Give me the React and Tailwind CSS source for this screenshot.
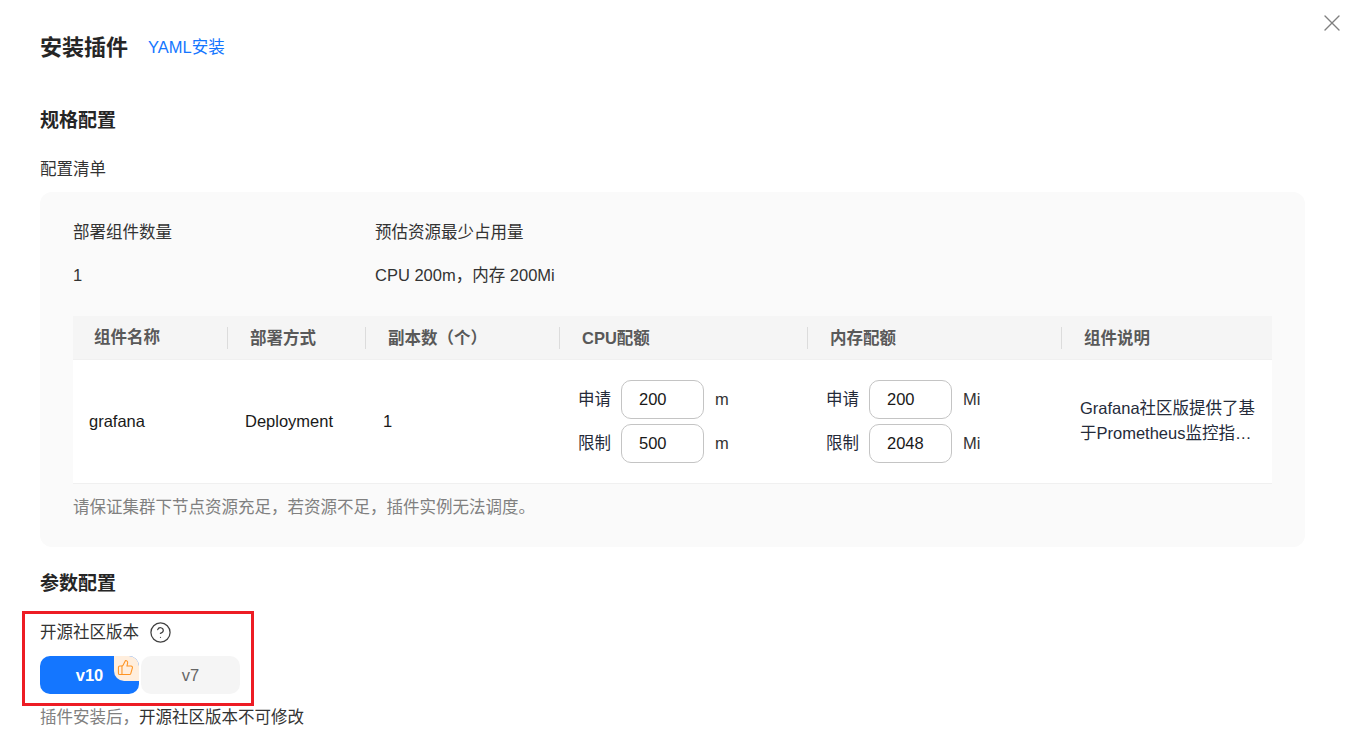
import { X, ThumbsUp, CircleHelp } from 'lucide-react';

const font = { fontFamily: '"Liberation Sans", "Noto Sans CJK SC", sans-serif' };

const columns = ['组件名称', '部署方式', '副本数（个）', 'CPU配额', '内存配额', '组件说明'];
const gridCols = 'grid grid-cols-[154px_138px_194px_248px_254px_1fr]';

function QuotaInput({ label, value, unit }) {
  return (
    <div className="flex items-center">
      <span className="w-[43px] text-[#252b3a]">{label}</span>
      <div className="flex h-[39px] w-[83px] items-center rounded-[10px] border border-[#c4c4c4] bg-white pl-[17px] text-[#191919]">
        {value}
      </div>
      <span className="ml-[11px] text-[#333]">{unit}</span>
    </div>
  );
}

function QuotaCell({ unit, request, limit }) {
  return (
    <div className="flex flex-col justify-center gap-[5px] pl-[19px]">
      <QuotaInput label="申请" value={request} unit={unit} />
      <QuotaInput label="限制" value={limit} unit={unit} />
    </div>
  );
}

export default function App() {
  return (
    <div style={font} className="relative h-[744px] overflow-hidden bg-white px-10 text-[16.5px] text-[#191919]">
      <button className="absolute right-[-1px] top-[9px] text-[#808080]">
        <X size={28} strokeWidth={1.2} />
      </button>

      <div className="flex h-[94px] items-center">
        <h1 className="text-[22px] font-bold text-[#262626]">安装插件</h1>
        <a className="ml-[20px] text-[#1476ff]">YAML安装</a>
      </div>

      <h2 className="mt-[14px] text-[19px] leading-[26px] font-bold text-[#262626]">规格配置</h2>
      <div className="mt-[23px] leading-[24px] text-[#333]">配置清单</div>

      <div className="mt-[11px] h-[355px] rounded-[12px] bg-[#fafafa] px-[33px] pt-[28px]">
        <div className="flex text-[#333]">
          <div className="w-[302px]">
            <div className="leading-[24px]">部署组件数量</div>
            <div className="mt-[19px] leading-[24px]">1</div>
          </div>
          <div>
            <div className="leading-[24px]">预估资源最少占用量</div>
            <div className="mt-[19px] leading-[24px]">CPU 200m，内存 200Mi</div>
          </div>
        </div>

        <div className={`${gridCols} mt-[29px] h-[44px] items-center border-b border-[#f0f0f0] bg-[#f5f5f5] font-bold text-[#595959]`}>
          {columns.map((name, i) => (
            <div key={name} className={i === 0 ? 'pl-[21px]' : 'border-l border-[#dcdcdc] pl-[22px] leading-[22px]'}>
              {name}
            </div>
          ))}
        </div>

        <div className={`${gridCols} h-[124px] border-b border-[#f0f0f0] bg-white`}>
          <div className="flex items-center pl-[16px]">grafana</div>
          <div className="flex items-center pl-[18px]">Deployment</div>
          <div className="flex items-center pl-[18px]">1</div>
          <QuotaCell unit="m" request="200" limit="500" />
          <QuotaCell unit="Mi" request="200" limit="2048" />
          <div className="flex items-center pl-[19px] pr-[13px]">
            <p className="line-clamp-2 leading-[25px] text-[#252b3a] -mt-[1px]">Grafana社区版提供了基于Prometheus监控指标的可视化能力</p>
          </div>
        </div>

        <div className="mt-[11px] leading-[24px] text-[#808080]">请保证集群下节点资源充足，若资源不足，插件实例无法调度。</div>
      </div>

      <h2 className="mt-[24px] text-[19px] leading-[26px] font-bold text-[#262626]">参数配置</h2>

      <div className="relative mt-[23px]">
        {/* red annotation drawn on the screenshot */}
        <div className="absolute left-[-18px] top-[-9px] h-[95px] w-[232px] border-[3px] border-[#ed1c24]" />
        <div className="flex h-[24px] items-center text-[#333]">
          开源社区版本
          <CircleHelp size={23} strokeWidth={1.3} className="ml-[10px] text-[#404040]" />
        </div>
        <div className="mt-[12px] flex gap-[2px]">
          <div className="relative flex h-[38px] w-[99px] items-center justify-center rounded-[10px] bg-[#1476ff] font-bold text-white">
            v10
            <div className="absolute right-0 top-0 flex h-[25px] w-[25px] items-center justify-center rounded-tr-[10px] rounded-bl-[10px] bg-[#ffeedd]">
              <ThumbsUp size={17} strokeWidth={1.5} className="-translate-x-[1px] -translate-y-[1px] text-[#ff9422]" />
            </div>
          </div>
          <div className="flex h-[38px] w-[99px] items-center justify-center rounded-[10px] bg-[#f5f5f5] text-[#666]">v7</div>
        </div>
      </div>

      <div className="mt-[11px] leading-[24px] text-[#808080]">
        插件安装后，<span className="text-[#333]">开源社区版本不可修改</span>
      </div>
    </div>
  );
}
